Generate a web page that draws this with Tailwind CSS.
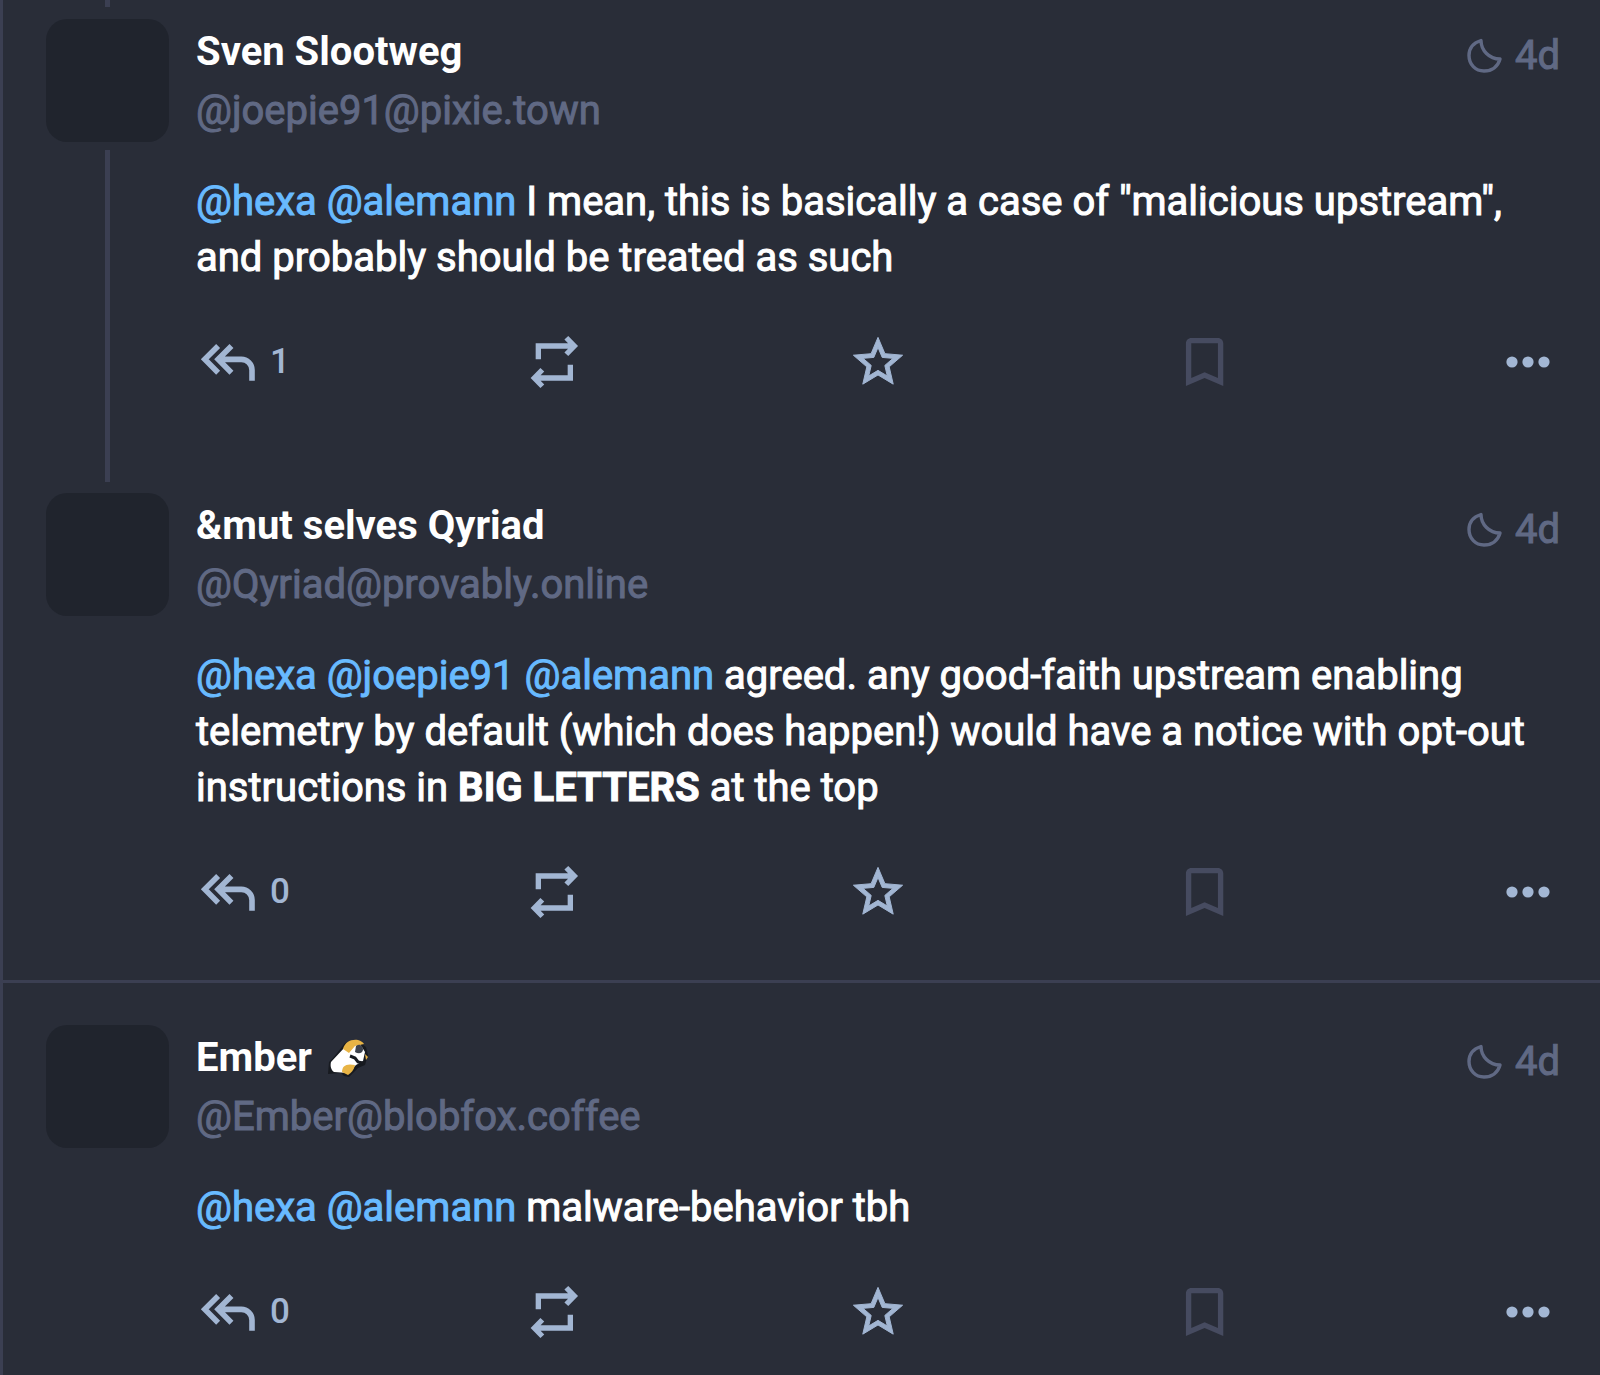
<!DOCTYPE html>
<html lang="en">
<head>
    <meta charset="UTF-8">
    <meta name="viewport" content="width=device-width, initial-scale=1.0">
    <title>Thread</title>
    <script src="https://cdn.jsdelivr.net/npm/@tailwindcss/browser@4"></script>
</head>
<body class="bg-[#292d38] font-['Roboto',sans-serif] text-[40px] leading-[56px] text-white">
    <!-- shared icons -->
    <svg class="hidden">
        <symbol id="reply" viewBox="0 0 24 24">
            <path d="M8.3 6l-5 5 5 5M13.3 6l-5 5 5 5M8.5 11H17a4 4 0 0 1 4 4v4" fill="none" stroke="currentColor" stroke-width="2.1"/>
        </symbol>
        <symbol id="boost" viewBox="0 0 24 24">
            <path d="M6.5 11V6H20M17 2.9L20 6l-3 3.1M18.5 13v5H5M8 14.9L5 18l3 3.1" fill="none" stroke="currentColor" stroke-width="2"/>
        </symbol>
        <symbol id="star" viewBox="-1 -1 26 26">
            <path d="M22 9.24l-7.19-.62L12 2 9.19 8.63 2 9.24l5.46 4.73L5.82 21 12 17.27 18.18 21l-1.63-7.03L22 9.24zM12 15.4l-3.76 2.27 1-4.28-3.32-2.88 4.38-.38L12 6.1l1.71 4.04 4.38.38-3.32 2.88 1 4.28L12 15.4z" fill="currentColor" stroke="currentColor" stroke-width="0.4"/>
        </symbol>
        <symbol id="bookmark" viewBox="-0.6 0 24 24">
            <path d="M17 3H7c-1.1 0-2 .9-2 2v16l7-3 7 3V5c0-1.1-.9-2-2-2zm0 15l-5-2.18L7 18V5h10v13z" fill="currentColor"/>
        </symbol>
        <symbol id="more" viewBox="0 0 24 24">
            <g fill="currentColor"><circle cx="6" cy="12" r="2.1"/><circle cx="12" cy="12" r="2.1"/><circle cx="18" cy="12" r="2.1"/></g>
        </symbol>
        <symbol id="moon" viewBox="0 0 36 36">
            <path d="M14 2.5C6 5 2 10.5 2 17.5 2 26.5 8.5 33 17 33c8 0 14-4.5 16-12-6 0-10-2-13.500-5.500S14 7.500 14 2.500z" fill="none" stroke="currentColor" stroke-width="3.400" stroke-linejoin="round"/>
        </symbol>
    </svg>

    <main class="min-h-screen border-l-[3px] border-[#3b3f52]">
        <article class="flex gap-[27px] pl-[43px] pr-10">
            <div class="flex w-[123px] shrink-0 flex-col items-center">
                <div class="mb-3 h-[7px] w-[5px] bg-[#3b3f52]"></div>
                <div class="h-[123px] w-full rounded-[21px] bg-[#20242d]"></div>
                <div class="mt-2 w-[5px] flex-1 bg-[#3b3f52]"></div>
            </div>
            <div class="min-w-0 flex-1 pt-[19px] pb-[88px]">
                <header class="mb-[35px] flex justify-between text-[#606984]">
                    <div>
                        <h2 class="pt-[5px] font-bold text-white">Sven Slootweg</h2>
                        <p class="pt-[3px] [-webkit-text-stroke:1px]">@joepie91@pixie.town</p>
                    </div>
                    <a href="#" class="mt-[9px] flex h-14 items-center gap-3 [-webkit-text-stroke:1px]"><svg class="size-9"><use href="#moon"/></svg><time>4d</time></a>
                </header>
                <p class="[-webkit-text-stroke:1px]"><a href="#" class="text-[#68baff]">@hexa</a> <a href="#" class="text-[#68baff]">@alemann</a> I mean, this is basically a case of "malicious upstream", and probably should be treated as such</p>
                <div class="mt-11 flex text-[#a2b6d3]">
                    <div class="flex-1"><button type="button" aria-label="Reply" class="flex items-center gap-2.5 text-[35px] font-medium"><svg class="size-16"><use href="#reply"/></svg>1</button></div>
                    <div class="flex-1"><button type="button" aria-label="Boost" class="block"><svg class="size-16"><use href="#boost"/></svg></button></div>
                    <div class="flex-1"><button type="button" aria-label="Favourite" class="block"><svg class="size-16"><use href="#star"/></svg></button></div>
                    <div class="flex-1"><button type="button" aria-label="Bookmark" class="block text-[#464b60]"><svg class="size-16"><use href="#bookmark"/></svg></button></div>
                    <button type="button" aria-label="More"><svg class="size-16"><use href="#more"/></svg></button>
                </div>
            </div>
        </article>

        <article class="flex gap-[27px] border-b-[3px] border-[#3b3f52] pt-[11px] pr-10 pb-14 pl-[43px]">
            <div class="h-[123px] w-[123px] shrink-0 rounded-[21px] bg-[#20242d]"></div>
            <div class="min-w-0 flex-1">
                <header class="mb-[35px] flex justify-between text-[#606984]">
                    <div>
                        <h2 class="pt-[5px] font-bold text-white">&amp;mut selves Qyriad</h2>
                        <p class="pt-[3px] [-webkit-text-stroke:1px]">@Qyriad@provably.online</p>
                    </div>
                    <a href="#" class="mt-[9px] flex h-14 items-center gap-3 [-webkit-text-stroke:1px]"><svg class="size-9"><use href="#moon"/></svg><time>4d</time></a>
                </header>
                <p class="[-webkit-text-stroke:1px]"><a href="#" class="text-[#68baff]">@hexa</a> <a href="#" class="text-[#68baff]">@joepie91</a> <a href="#" class="text-[#68baff]">@alemann</a> agreed. any good-faith upstream enabling telemetry by default (which does happen!) would have a notice with opt-out instructions in <strong class="font-bold">BIG LETTERS</strong> at the top</p>
                <div class="mt-11 flex text-[#a2b6d3]">
                    <div class="flex-1"><button type="button" aria-label="Reply" class="flex items-center gap-2.5 text-[35px] font-medium"><svg class="size-16"><use href="#reply"/></svg>0</button></div>
                    <div class="flex-1"><button type="button" aria-label="Boost" class="block"><svg class="size-16"><use href="#boost"/></svg></button></div>
                    <div class="flex-1"><button type="button" aria-label="Favourite" class="block"><svg class="size-16"><use href="#star"/></svg></button></div>
                    <div class="flex-1"><button type="button" aria-label="Bookmark" class="block text-[#464b60]"><svg class="size-16"><use href="#bookmark"/></svg></button></div>
                    <button type="button" aria-label="More"><svg class="size-16"><use href="#more"/></svg></button>
                </div>
            </div>
        </article>

        <article class="flex gap-[27px] pt-[42px] pr-10 pl-[43px]">
            <div class="h-[123px] w-[123px] shrink-0 rounded-[21px] bg-[#20242d]"></div>
            <div class="min-w-0 flex-1">
                <header class="mb-[35px] flex justify-between text-[#606984]">
                    <div>
                        <h2 class="flex items-center gap-4 pt-[5px] font-bold text-white">Ember
                            <svg class="size-10" viewBox="0 0 40 40">
                                <path d="M0 36l1-12 4-4L17 5l12-3 9 7 2 8-3 10-7 3-9 9-5-1-3-3z" fill="#171a20"/>
                                <path d="M3 24L17 9l15-3 5 8-2 9-7 4-8 8-14-1c-3-2-4-6-3-10z" fill="#fff"/>
                                <path d="M15 11c2-7 8-10 15-9 3 1 5 2 6 4l-9 2-6 7z" fill="#e8b445"/>
                                <path d="M14 34c0-6 4-9 13-7-1 5-4 8-7 10z" fill="#e8b445"/>
                                <path d="M28 8c4-3 7 0 7 4-1 4-5 4-8 2z" fill="#3d424c"/>
                                <path d="M22 18l5 2 3 4 5 1" fill="none" stroke="#171a20" stroke-width="3"/>
                                <path d="M37 16l3 3-2 3z" fill="#e8b445"/>
                            </svg>
                        </h2>
                        <p class="pt-[3px] [-webkit-text-stroke:1px]">@Ember@blobfox.coffee</p>
                    </div>
                    <a href="#" class="mt-[9px] flex h-14 items-center gap-3 [-webkit-text-stroke:1px]"><svg class="size-9"><use href="#moon"/></svg><time>4d</time></a>
                </header>
                <p class="[-webkit-text-stroke:1px]"><a href="#" class="text-[#68baff]">@hexa</a> <a href="#" class="text-[#68baff]">@alemann</a> malware-behavior tbh</p>
                <div class="mt-11 flex text-[#a2b6d3]">
                    <div class="flex-1"><button type="button" aria-label="Reply" class="flex items-center gap-2.5 text-[35px] font-medium"><svg class="size-16"><use href="#reply"/></svg>0</button></div>
                    <div class="flex-1"><button type="button" aria-label="Boost" class="block"><svg class="size-16"><use href="#boost"/></svg></button></div>
                    <div class="flex-1"><button type="button" aria-label="Favourite" class="block"><svg class="size-16"><use href="#star"/></svg></button></div>
                    <div class="flex-1"><button type="button" aria-label="Bookmark" class="block text-[#464b60]"><svg class="size-16"><use href="#bookmark"/></svg></button></div>
                    <button type="button" aria-label="More"><svg class="size-16"><use href="#more"/></svg></button>
                </div>
            </div>
        </article>
    </main>
</body>
</html>
